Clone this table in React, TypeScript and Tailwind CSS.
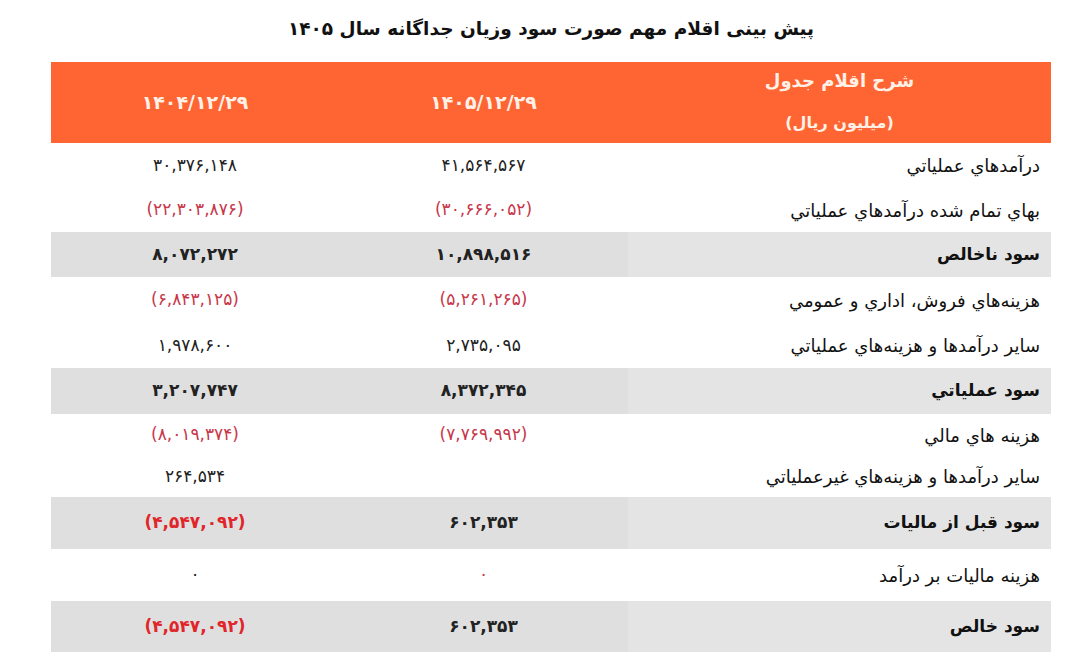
import React from 'react';

type Row = {
  label: string;
  v1405: string;
  v1404: string;
  neg1405?: boolean;
  neg1404?: boolean;
  total?: boolean;
  h: string;
};

const rows: Row[] = [
  { label: 'درآمدهاي عملياتي', v1405: '۴۱,۵۶۴,۵۶۷', v1404: '۳۰,۳۷۶,۱۴۸', h: 'h-[45px]' },
  { label: 'بهاي تمام شده درآمدهاي عملياتي', v1405: '(۳۰,۶۶۶,۰۵۲)', v1404: '(۲۲,۳۰۳,۸۷۶)', neg1405: true, neg1404: true, h: 'h-[44px]' },
  { label: 'سود ناخالص', v1405: '۱۰,۸۹۸,۵۱۶', v1404: '۸,۰۷۲,۲۷۲', total: true, h: 'h-[45px]' },
  { label: 'هزينه‌هاي فروش، اداري و عمومي', v1405: '(۵,۲۶۱,۲۶۵)', v1404: '(۶,۸۴۳,۱۲۵)', neg1405: true, neg1404: true, h: 'h-[46px]' },
  { label: 'ساير درآمدها و هزينه‌هاي عملياتي', v1405: '۲,۷۳۵,۰۹۵', v1404: '۱,۹۷۸,۶۰۰', h: 'h-[45px]' },
  { label: 'سود عملياتي', v1405: '۸,۳۷۲,۳۴۵', v1404: '۳,۲۰۷,۷۴۷', total: true, h: 'h-[46px]' },
  { label: 'هزينه هاي مالي', v1405: '(۷,۷۶۹,۹۹۲)', v1404: '(۸,۰۱۹,۳۷۴)', neg1405: true, neg1404: true, h: 'h-[42px]' },
  { label: 'ساير درآمدها و هزينه‌هاي غيرعملياتي', v1405: '', v1404: '۲۶۴,۵۳۴', h: 'h-[41px]' },
  { label: 'سود قبل از ماليات', v1405: '۶۰۲,۳۵۳', v1404: '(۴,۵۴۷,۰۹۲)', neg1404: true, total: true, h: 'h-[52px]' },
  { label: 'هزينه ماليات بر درآمد', v1405: '۰', v1404: '۰', neg1405: true, h: 'h-[52px]' },
  { label: 'سود خالص', v1405: '۶۰۲,۳۵۳', v1404: '(۴,۵۴۷,۰۹۲)', neg1404: true, total: true, h: 'h-[51px]' },
];

function NumCell({ value, neg, total, bg }: { value: string; neg?: boolean; total?: boolean; bg: string }) {
  const color = neg ? (total ? 'text-[#e0262a]' : 'text-[#c8374a]') : 'text-[#222]';
  return (
    <div className={`flex items-center justify-center ${bg}`}>
      <span dir="ltr" className={`text-[17px] tracking-[1.5px] ${total ? 'font-bold' : ''} ${color}`}>
        {value}
      </span>
    </div>
  );
}

export default function App() {
  return (
    <div className="w-[1080px] h-[667px] bg-white overflow-hidden" style={{ fontFamily: '"DejaVu Sans", "Noto Sans", sans-serif' }}>
      <div className="w-[1000px] ml-[51px]">
        <h1 dir="rtl" className="h-[62px] pb-[4px] flex items-center justify-center text-[18.5px] font-bold text-[#111]">
          پيش بينی اقلام مهم صورت سود وزيان جداگانه سال ۱۴۰۵
        </h1>

        <div dir="rtl" className="grid grid-cols-[423px_289px_288px]">
          <div className="h-[81px] bg-[#ff6433] flex flex-col items-center justify-center gap-[22px] pb-[2px] text-[#fff1e6] font-bold">
            <span className="text-[18px] leading-[20px]">شرح اقلام جدول</span>
            <span className="text-[16px] leading-[20px]">(ميليون ريال)</span>
          </div>
          <div className="h-[81px] bg-[#ff6433] flex items-center justify-center text-[#fff1e6] font-bold">
            <span dir="ltr" className="text-[19px] tracking-[1.5px]">۱۴۰۵/۱۲/۲۹</span>
          </div>
          <div className="h-[81px] bg-[#ff6433] flex items-center justify-center text-[#fff1e6] font-bold">
            <span dir="ltr" className="text-[19px] tracking-[1.5px]">۱۴۰۴/۱۲/۲۹</span>
          </div>

          {rows.map((r, i) => {
            const labelBg = r.total ? 'bg-[#e4e4e4]' : 'bg-white';
            const numBg = r.total ? 'bg-[#dfdfdf]' : 'bg-white';
            return (
              <React.Fragment key={i}>
                <div className={`${r.h} ${labelBg} flex items-center pr-[11px] text-[#111] ${r.total ? 'font-bold text-[17px]' : 'text-[18px]'}`}>
                  {r.label}
                </div>
                <NumCell value={r.v1405} neg={r.neg1405} total={r.total} bg={numBg} />
                <NumCell value={r.v1404} neg={r.neg1404} total={r.total} bg={numBg} />
              </React.Fragment>
            );
          })}
        </div>
      </div>
    </div>
  );
}
